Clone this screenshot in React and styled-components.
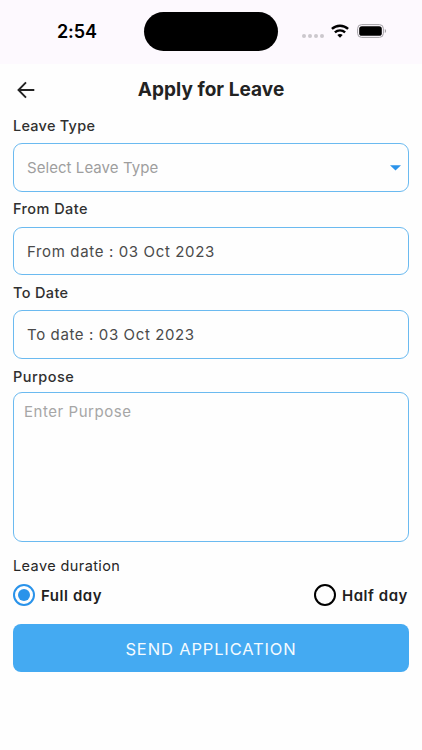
import { useState } from "react";
import styled, { createGlobalStyle } from "styled-components";

const App = () => {
    const [duration, setDuration] = useState("full");

    return (
        <Screen>
            <GlobalStyle />
            <StatusBar>
                <Time>2:54</Time>
                <Island />
                <StatusIcons>
                    <Dots><i /><i /><i /><i /></Dots>
                    <WifiIcon />
                    <BatteryIcon />
                </StatusIcons>
            </StatusBar>

            <Header>
                <BackButton aria-label="Back">
                    <svg width="18" height="18" viewBox="0 0 18 18" fill="none" stroke="#222" strokeWidth="1.9">
                        <path d="M17.3 9H1.8M9 1.3L1.5 9L9 16.7" />
                    </svg>
                </BackButton>
                <Title>Apply for Leave</Title>
            </Header>

            <Form>
                <Label $spacing="0.25px">Leave Type</Label>
                <Field $placeholder>
                    <FieldText $spacing="0.06px">Select Leave Type</FieldText>
                    <svg width="11" height="6" viewBox="0 0 10 6" preserveAspectRatio="none">
                        <path d="M0 0.3H10L5 5.6Z" fill="#2a93ea" />
                    </svg>
                </Field>

                <Label $spacing="0.43px">From Date</Label>
                <Field>
                    <FieldText $spacing="0.64px">From date : 03 Oct 2023</FieldText>
                </Field>

                <Label $spacing="0.36px">To Date</Label>
                <Field>
                    <FieldText $spacing="0.62px">To date : 03 Oct 2023</FieldText>
                </Field>

                <PurposeLabel $spacing="0.5px">Purpose</PurposeLabel>
                <Purpose placeholder="Enter Purpose" />

                <DurationLabel>Leave duration</DurationLabel>
                <RadioRow>
                    <Radio onClick={() => setDuration("full")}>
                        <Circle $active={duration === "full"} />
                        Full day
                    </Radio>
                    <Radio onClick={() => setDuration("half")}>
                        <Circle $active={duration === "half"} />
                        Half day
                    </Radio>
                </RadioRow>

                <SendButton>SEND APPLICATION</SendButton>
            </Form>
        </Screen>
    );
};

const WifiIcon = () => (
    <svg width="18" height="14" viewBox="0 0 18 14" fill="none" stroke="#000" strokeWidth="2.4">
        <path d="M0.9 4.9C5.4 0.6 12.6 0.6 17.1 4.9" />
        <path d="M3.9 8.4C6.8 5.7 11.2 5.7 14.1 8.4" />
        <path d="M9 13.8L6.3 11C7.8 9.6 10.2 9.6 11.7 11Z" fill="#000" stroke="none" />
    </svg>
);

const BatteryIcon = () => (
    <svg width="30" height="14" viewBox="0 0 30 14">
        <rect x="0.6" y="0.6" width="25.8" height="12.8" rx="4" fill="none" stroke="#a3a0a5" strokeWidth="1" />
        <rect x="2.2" y="2.2" width="22.6" height="9.6" rx="2.6" fill="#000" />
        <path d="M27.8 4.9C29.6 5.6 29.6 8.4 27.8 9.1Z" fill="#a3a0a5" />
    </svg>
);

export default App;

const GlobalStyle = createGlobalStyle`
    * {
        box-sizing: border-box;
    }

    body {
        margin: 0;
        background: #fefefe;
        font-family: Inter, "Liberation Sans", sans-serif;
    }

    button, textarea {
        font-family: inherit;
    }
`;

const Screen = styled.div`
    width: 422px;
    height: 750px;
    background: #fefefe;
    overflow: hidden;
`;

const StatusBar = styled.div`
    display: flex;
    align-items: center;
    height: 64px;
    padding: 0 34px 2px 57px;
    background: #fdf9fe;
`;

const Time = styled.div`
    width: 87px;
    padding-top: 2px;
    font-size: 18px;
    font-weight: 600;
    line-height: 22px;
    letter-spacing: -0.1px;
    color: #000;
`;

const Island = styled.div`
    width: 134px;
    height: 39px;
    margin-top: 1px;
    border-radius: 20px;
    background: #000;
`;

const StatusIcons = styled.div`
    display: flex;
    align-items: center;
    margin-left: 24px;
`;

const Dots = styled.div`
    display: flex;
    gap: 2px;
    margin: 9px 7px 0 0;

    i {
        width: 4px;
        height: 4px;
        border-radius: 50%;
        background: #cbc8cd;
    }

    & + svg {
        margin-right: 8px;
    }
`;

const Header = styled.div`
    display: grid;
    grid-template-columns: 44px 1fr 44px;
    align-items: center;
    height: 52px;
`;

const BackButton = styled.button`
    display: flex;
    padding: 0 0 0 17px;
    border: 0;
    background: none;
    cursor: pointer;
`;

const Title = styled.h1`
    margin: 0;
    font-size: 19px;
    font-weight: 700;
    line-height: 24px;
    letter-spacing: 0.05px;
    text-align: center;
    color: #222;
`;

const Form = styled.div`
    display: flex;
    flex-direction: column;
    padding: 0 13px;
`;

const Label = styled.div`
    height: 19px;
    font-size: 14.5px;
    font-weight: 500;
    line-height: 19px;
    letter-spacing: ${props => props.$spacing};
    color: #303030;
`;

const PurposeLabel = styled(Label)`
    margin-top: 1px;
`;

const Field = styled.div`
    display: flex;
    align-items: center;
    justify-content: space-between;
    height: 48.5px;
    margin: 8.2px 0 7.8px;
    padding: 1px 7px 0 13px;
    border: 1.4px solid #6bbaf0;
    border-radius: 9px;
    color: ${props => props.$placeholder ? '#9e9e9e' : '#4a4a4a'};
`;

const FieldText = styled.span`
    padding-top: 1px;
    font-size: 15px;
    line-height: 20px;
    letter-spacing: ${props => props.$spacing};
`;

const Purpose = styled.textarea`
    display: block;
    height: 150px;
    margin-top: 5.6px;
    padding: 9px 10px;
    border: 1.4px solid #6bbaf0;
    border-radius: 9px;
    outline: none;
    background: transparent;
    font-size: 15px;
    line-height: 20px;
    letter-spacing: 0.55px;
    color: #4a4a4a;
    resize: none;

    &::placeholder {
        color: #a6a6a6;
    }
`;

const DurationLabel = styled.div`
    margin-top: 14.4px;
    font-size: 14.5px;
    line-height: 19px;
    letter-spacing: 0.4px;
    color: #262626;
`;

const RadioRow = styled.div`
    display: flex;
    justify-content: space-between;
    margin-top: 9px;
    padding-right: 1px;
`;

const Radio = styled.button`
    display: flex;
    align-items: center;
    gap: 6px;
    height: 22px;
    padding: 0;
    border: 0;
    background: none;
    font-size: 15px;
    font-weight: 600;
    font-feature-settings: "cv11";
    letter-spacing: 0.55px;
    color: #1f1f1f;
    cursor: pointer;
`;

const Circle = styled.span`
    display: flex;
    align-items: center;
    justify-content: center;
    width: 22px;
    height: 22px;
    border: 2px solid ${props => props.$active ? '#2a93ea' : '#000'};
    border-radius: 50%;

    ${props => props.$active && `
        &::after {
            content: '';
            width: 12px;
            height: 12px;
            border-radius: 50%;
            background: #2a93ea;
        }
    `}
`;

const SendButton = styled.button`
    height: 48px;
    margin-top: 18px;
    padding: 1px 0 0;
    border: 0;
    border-radius: 8px;
    background: #44aaf2;
    font-size: 16.5px;
    letter-spacing: 0.85px;
    color: #f4fbff;
    cursor: pointer;
`;
